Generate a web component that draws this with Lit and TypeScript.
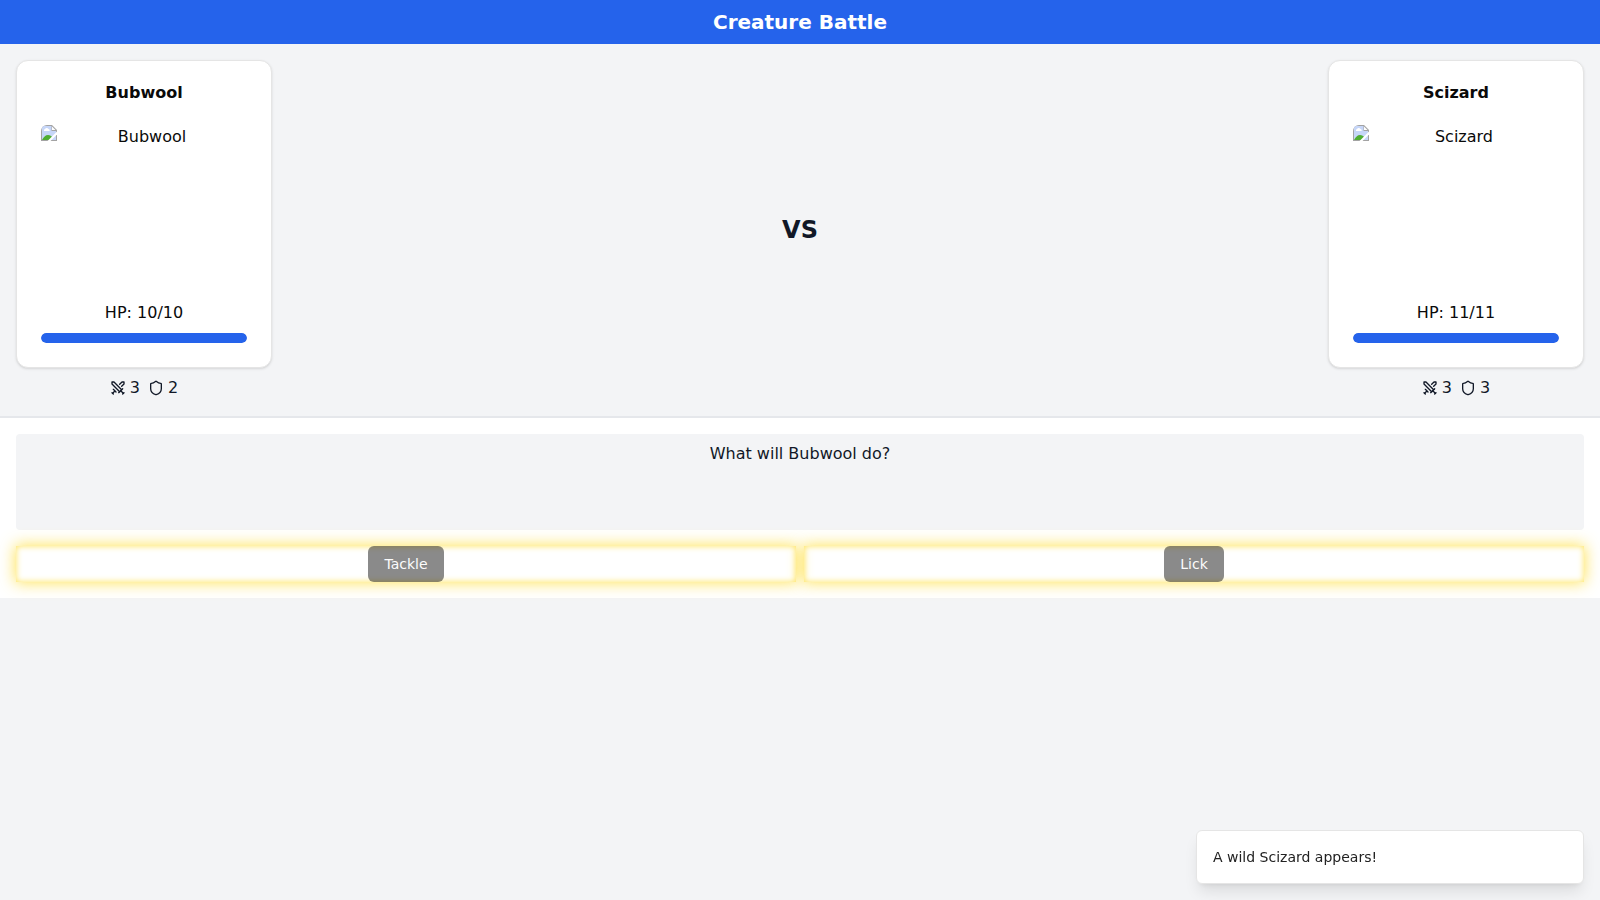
import { LitElement, html, css, svg } from "lit";
import { customElement, property, state } from "lit/decorators.js";

interface Creature {
  name: string;
  hp: number;
  maxHp: number;
  attack: number;
  defense: number;
}

const swordsIcon = svg`
  <polyline points="14.5 17.5 3 6 3 3 6 3 17.5 14.5" />
  <line x1="13" x2="19" y1="19" y2="13" />
  <line x1="16" x2="20" y1="16" y2="20" />
  <line x1="19" x2="21" y1="21" y2="19" />
  <polyline points="14.5 6.5 18 3 21 3 21 6 17.5 9.5" />
  <line x1="5" x2="9" y1="14" y2="18" />
  <line x1="7" x2="4" y1="17" y2="20" />
  <line x1="3" x2="5" y1="19" y2="21" />`;

const shieldIcon = svg`
  <path d="M20 13c0 5-3.5 7.5-7.66 8.95a1 1 0 0 1-.67-.01C7.5 20.5 4 18 4 13V6a1 1 0 0 1 1-1c2 0 4.5-1.2 6.24-2.72a1.17 1.17 0 0 1 1.52 0C14.51 3.81 17 5 19 5a1 1 0 0 1 1 1z" />`;

@customElement("creature-card")
class CreatureCard extends LitElement {
  @property({ attribute: false }) creature!: Creature;

  static styles = css`
    :host {
      display: flex;
      flex-direction: column;
      width: 256px;
    }
    * {
      box-sizing: border-box;
    }
    .card {
      border: 1px solid #e5e5e5;
      border-radius: 12px;
      background: #ffffff;
      color: #0a0a0a;
      box-shadow: 0 1px 3px 0 rgb(0 0 0 / 0.1), 0 1px 2px -1px rgb(0 0 0 / 0.1);
      padding: 24px;
      text-align: center;
    }
    .name {
      margin: 0 0 24px;
      font-size: 16px;
      line-height: 16px;
      font-weight: 600;
    }
    .picture {
      display: flex;
      height: 160px;
      margin-bottom: 16px;
      border-radius: 6px;
      overflow: hidden;
    }
    .missing {
      width: 16px;
      height: 16px;
      flex: none;
    }
    .alt {
      flex: 1;
    }
    .hp {
      margin: 0 0 8px;
    }
    .track {
      height: 10px;
      border-radius: 9999px;
      background: #e5e7eb;
      overflow: hidden;
    }
    .fill {
      height: 100%;
      border-radius: 9999px;
      background: #2563eb;
    }
    .stats {
      display: flex;
      justify-content: center;
      gap: 8px;
      margin-top: 8px;
    }
    .stat {
      display: flex;
      align-items: center;
      gap: 4px;
    }
    .icon {
      width: 16px;
      height: 16px;
      fill: none;
      stroke: currentColor;
      stroke-width: 2;
      stroke-linecap: round;
      stroke-linejoin: round;
    }
  `;

  render() {
    const c = this.creature;
    return html`
      <article class="card">
        <h2 class="name">${c.name}</h2>
        <div class="picture">
          <svg class="missing" viewBox="0 0 16 16" aria-hidden="true">
            <path d="M0 0h11l5 5v11H0z" fill="#a3a3a3" />
            <path d="M1 1h9.500v5H15v9H1z" fill="#c6d6f8" />
            <path d="M11 1.500V5h3.500z" fill="#ffffff" />
            <path d="M3 6a1.500 1.500 0 0 1 1-2a2 2 0 0 1 3.500 0a1.300 1.300 0 0 1 1 2z" fill="#ffffff" />
            <path d="M1 15c1.500-3 3.500-5 6-5c2 0 3.500 1 4.500 2.500L9 15z" fill="#4fae32" />
            <path d="M16 6.500v3L9.500 16H6.500z" fill="#ffffff" />
            <path d="M12 15l3-3v3z" fill="#c6d6f8" />
          </svg>
          <span class="alt">${c.name}</span>
        </div>
        <p class="hp">HP: ${c.hp}/${c.maxHp}</p>
        <div
          class="track"
          role="progressbar"
          aria-label="${c.name} HP"
          aria-valuenow=${c.hp}
          aria-valuemax=${c.maxHp}
        >
          <div class="fill" style="width: ${(c.hp / c.maxHp) * 100}%"></div>
        </div>
      </article>
      <div class="stats">
        <span class="stat">
          <svg class="icon" viewBox="0 0 24 24" aria-hidden="true">${swordsIcon}</svg>
          <span>${c.attack}</span>
        </span>
        <span class="stat">
          <svg class="icon" viewBox="0 0 24 24" aria-hidden="true">${shieldIcon}</svg>
          <span>${c.defense}</span>
        </span>
      </div>
    `;
  }
}

@customElement("app-root")
class AppRoot extends LitElement {
  @state() private player: Creature = { name: "Bubwool", hp: 10, maxHp: 10, attack: 3, defense: 2 };
  @state() private opponent: Creature = { name: "Scizard", hp: 11, maxHp: 11, attack: 3, defense: 3 };
  @state() private moves = ["Tackle", "Lick"];

  static styles = css`
    :host {
      display: block;
      min-height: 100vh;
      background: #f3f4f6;
      color: #111827;
      font-family: "DejaVu Sans", sans-serif;
      font-size: 16px;
      line-height: 24px;
    }
    * {
      box-sizing: border-box;
    }
    .header {
      padding: 8px;
      background: #2563eb;
      color: #ffffff;
      text-align: center;
    }
    .title {
      margin: 0;
      font-size: 20px;
      line-height: 28px;
      font-weight: 700;
    }
    .arena {
      display: flex;
      justify-content: space-between;
      align-items: center;
      padding: 16px;
    }
    .versus {
      font-size: 24px;
      line-height: 32px;
      font-weight: 700;
    }
    .panel {
      padding: 16px;
      border-top: 2px solid #e5e7eb;
      background: #ffffff;
    }
    .message {
      height: 96px;
      margin: 0 0 16px;
      padding: 8px;
      border-radius: 4px;
      background: #f3f4f6;
      text-align: center;
    }
    .moves {
      display: grid;
      grid-template-columns: 1fr 1fr;
      gap: 8px;
    }
    .slot {
      display: flex;
      justify-content: center;
      box-shadow: 0 0 15px 1px rgb(255 221 51 / 0.8), inset 0 0 6px rgb(255 221 51 / 0.8);
    }
    .move {
      height: 36px;
      padding: 8px 16px;
      border: 0;
      border-radius: 6px;
      background: #171717;
      color: #fafafa;
      font-family: inherit;
      font-size: 14px;
      line-height: 20px;
      font-weight: 500;
      opacity: 0.5;
    }
    .toast {
      position: fixed;
      right: 16px;
      bottom: 16px;
      width: 388px;
      max-width: calc(100vw - 32px);
      padding: 16px;
      border: 1px solid #e5e5e5;
      border-radius: 6px;
      background: #ffffff;
      color: #222222;
      font-size: 14px;
      line-height: 20px;
      box-shadow: 0 10px 15px -3px rgb(0 0 0 / 0.1), 0 4px 6px -4px rgb(0 0 0 / 0.1);
    }
  `;

  render() {
    return html`
      <header class="header"><h1 class="title">Creature Battle</h1></header>
      <main>
        <section class="arena">
          <creature-card .creature=${this.player}></creature-card>
          <div class="versus">VS</div>
          <creature-card .creature=${this.opponent}></creature-card>
        </section>
        <section class="panel">
          <p class="message">What will ${this.player.name} do?</p>
          <div class="moves">
            ${this.moves.map(
              (move) => html`<div class="slot"><button class="move" type="button" disabled>${move}</button></div>`
            )}
          </div>
        </section>
      </main>
      <div class="toast" role="status">A wild ${this.opponent.name} appears!</div>
    `;
  }
}
